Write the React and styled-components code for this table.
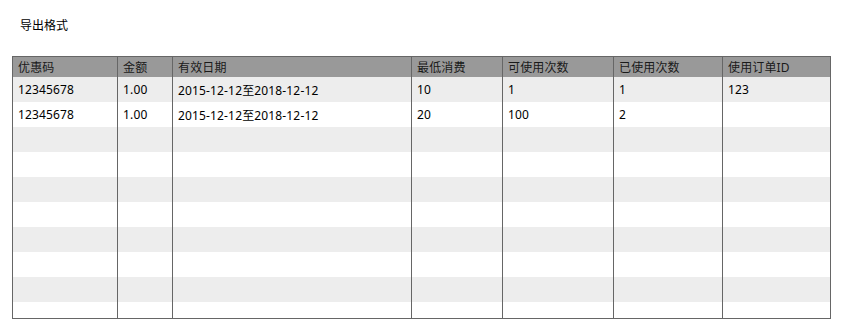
import React from 'react';
import styled, { createGlobalStyle } from 'styled-components';

const GlobalStyle = createGlobalStyle`
  body {
    margin: 0;
    background: #fff;
    font-family: 'Noto Sans', 'Noto Sans CJK SC', sans-serif;
    font-size: 12px;
    color: #000;
  }
`;

const Page = styled.div`
  padding: 18px 12px;
`;

const Title = styled.div`
  margin-left: 8px;
  line-height: 16px;
  margin-bottom: 22px;
`;

const TableBox = styled.div`
  width: 819px;
  height: 263px;
  box-sizing: border-box;
  border: 1px solid #666;
  overflow: hidden;
`;

const Row = styled.div`
  display: grid;
  grid-template-columns: 104px 55px 239px 91px 111px 109px 108px;
  height: ${p => (p.head ? 20 : 25)}px;
  background: ${p => (p.head ? '#999' : p.odd ? '#ededed' : '#fff')};
  color: ${p => (p.head ? '#1a1a1a' : '#000')};
`;

const Cell = styled.div`
  box-sizing: border-box;
  padding: 0 5px;
  display: flex;
  align-items: center;
  white-space: nowrap;
  overflow: hidden;
  letter-spacing: 0.15px;
  border-left: 1px solid #666;
  &:first-child {
    border-left: none;
  }
`;

const columns = ['优惠码', '金额', '有效日期', '最低消费', '可使用次数', '已使用次数', '使用订单ID'];

const data = [
  ['12345678', '1.00', '2015-12-12至2018-12-12', '10', '1', '1', '123'],
  ['12345678', '1.00', '2015-12-12至2018-12-12', '20', '100', '2', ''],
];

function App() {
  const rows = [...data];
  while (rows.length < 10) rows.push(['', '', '', '', '', '', '']);

  return (
    <Page>
      <GlobalStyle />
      <Title>导出格式</Title>
      <TableBox>
        <Row head>
          {columns.map(c => (
            <Cell key={c}>{c}</Cell>
          ))}
        </Row>
        {rows.map((r, i) => (
          <Row key={i} odd={i % 2 === 0}>
            {r.map((v, j) => (
              <Cell key={j}>{v}</Cell>
            ))}
          </Row>
        ))}
      </TableBox>
    </Page>
  );
}

export default App;
